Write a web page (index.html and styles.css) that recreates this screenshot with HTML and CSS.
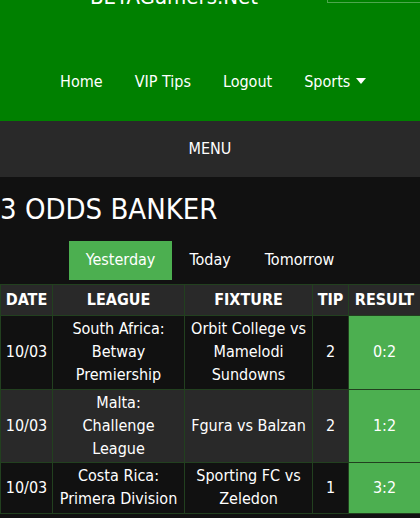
FILE: index.html
```html
<!DOCTYPE html>
<html lang="en">
<head>
    <meta charset="UTF-8">
    <meta name="viewport" content="width=device-width, initial-scale=1.0">
    <title>3 Odds Banker - BETAGamers.Net</title>
    <link rel="stylesheet" href="styles.css">
</head>
<body>
    <header class="site-header">
        <div class="brand-row">
            <a class="brand" href="#">BETAGamers.Net</a>
            <div class="search-box"></div>
        </div>
        <nav class="main-nav">
            <a href="#">Home</a>
            <a href="#">VIP Tips</a>
            <a href="#">Logout</a>
            <a href="#" class="dropdown">Sports <span class="caret"></span></a>
        </nav>
    </header>

    <div class="menu-bar">MENU</div>

    <main class="content">
        <h1>3 ODDS BANKER</h1>

        <div class="tabs">
            <a href="#" class="tab active">Yesterday</a>
            <a href="#" class="tab">Today</a>
            <a href="#" class="tab">Tomorrow</a>
        </div>

        <table class="tips">
            <colgroup>
                <col class="c-date">
                <col class="c-league">
                <col class="c-fixture">
                <col class="c-tip">
                <col class="c-result">
            </colgroup>
            <thead>
                <tr>
                    <th>DATE</th>
                    <th>LEAGUE</th>
                    <th>FIXTURE</th>
                    <th>TIP</th>
                    <th>RESULT</th>
                </tr>
            </thead>
            <tbody>
                <tr>
                    <td>10/03</td>
                    <td class="league">South Africa: Betway Premiership</td>
                    <td>Orbit College vs Mamelodi Sundowns</td>
                    <td>2</td>
                    <td class="won">0:2</td>
                </tr>
                <tr>
                    <td>10/03</td>
                    <td class="league">Malta: Challenge League</td>
                    <td>Fgura vs Balzan</td>
                    <td>2</td>
                    <td class="won">1:2</td>
                </tr>
                <tr>
                    <td>10/03</td>
                    <td class="league">Costa Rica: Primera Division</td>
                    <td>Sporting FC vs Zeledon</td>
                    <td>1</td>
                    <td class="won">3:2</td>
                </tr>
            </tbody>
        </table>
    </main>
</body>
</html>
```

FILE: styles.css
```css
body {
    margin: 0;
    font-family: 'DejaVu Sans Condensed', 'DejaVu Sans', Tahoma, sans-serif;
    font-size: 16px;
    line-height: 1.42857;
    background: #111;
    color: #fff;
}

a {
    color: #fff;
    text-decoration: none;
}

.site-header {
    background: #008000;
}

.brand-row {
    display: flex;
    align-items: flex-end;
    height: 40px;
    margin-top: -28px;
    padding-left: 90px;
}

.brand {
    font-size: 22px;
    line-height: 30px;
}

.search-box {
    align-self: flex-start;
    margin-left: auto;
    width: 92px;
    height: 29px;
    border: 1px solid rgba(255, 255, 255, 0.3);
    border-right: none;
}

.main-nav {
    display: flex;
    justify-content: center;
    padding: 49px 0 17px 6px;
}

.main-nav a {
    padding: 10px 16px;
}

.caret {
    display: inline-block;
    width: 0;
    height: 0;
    border-top: 6px solid #fff;
    border-left: 5px solid transparent;
    border-right: 5px solid transparent;
    vertical-align: 3px;
    margin-left: 1px;
}

.menu-bar {
    background: #292929;
    text-align: center;
    padding: 16px 0;
    line-height: 24px;
}

.content h1 {
    font-size: 29px;
    font-weight: normal;
    line-height: 1.1;
    margin: 17px 0 15px;
}

.tabs {
    display: flex;
    justify-content: center;
    margin-bottom: 4px;
}

.tab {
    padding: 8px 17px;
}

.tab.active {
    background: #4caf50;
}

.tips {
    width: 100%;
    border-collapse: collapse;
    table-layout: fixed;
}

.c-date { width: 52px; }
.c-league { width: 132px; }
.c-fixture { width: 128px; }
.c-tip { width: 36px; }
.c-result { width: 72px; }

.tips th,
.tips td {
    border: 1px solid #22401f;
    text-align: center;
}

.tips th {
    background: #292929;
    padding: 4px 1px;
}

.tips td {
    padding: 2px 3px;
}

.tips td.league {
    padding: 2px 6px;
}

.tips tbody tr:nth-child(even) td {
    background: #292929;
}

.tips td.won,
.tips tbody tr:nth-child(even) td.won {
    background: #4caf50;
}
```
